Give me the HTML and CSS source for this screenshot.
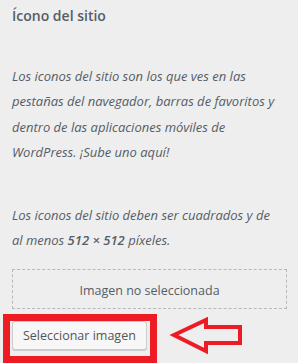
FILE: index.html
```html
<!DOCTYPE html>
<html lang="es">
<head>
<meta charset="utf-8">
<link rel="stylesheet" href="styles.css">
</head>
<body>
<div class="panel">
  <h3 class="title">Ícono del sitio</h3>
  <p class="desc">Los iconos del sitio son los que ves en las pestañas del navegador, barras de favoritos y dentro de las aplicaciones móviles de WordPress. ¡Sube uno aquí!</p>
  <p class="desc desc-2">Los iconos del sitio deben ser cuadrados y de al menos <strong>512 × 512</strong> píxeles.</p>
  <div class="placeholder">Imagen no seleccionada</div>
  <div class="actions">
    <button class="btn" type="button">Seleccionar imagen</button>
  </div>
</div>
<div class="highlight"></div>
<svg class="arrow" width="90" height="50" viewBox="0 0 90 50">
  <polygon points="14,25 46,10 46,17 80,17 80,33 46,33 46,41" fill="none" stroke="#ed1c24" stroke-width="4" stroke-linejoin="miter" stroke-miterlimit="10"/>
</svg>
</body>
</html>
```

FILE: styles.css
```css
html, body {
  margin: 0;
  padding: 0;
  background: #eeeeee;
  height: 100%;
  overflow: hidden;
}
body {
  font-family: "Open Sans", "Liberation Sans", sans-serif;
  color: #555d66;
  position: relative;
}
.panel {
  padding: 4px 11px 0 12px;
}
.title {
  margin: 0;
  font-size: 14px;
  line-height: 24.5px;
  font-weight: 600;
  color: #555d66;
}
.desc {
  margin: 35px 0 0;
  padding-right: 9px;
  font-size: 13px;
  line-height: 25.5px;
  font-style: italic;
  color: #555d66;
}
.desc-2 {
  margin-top: 37px;
}
.desc strong {
  font-weight: 600;
}
.placeholder {
  margin-top: 15.5px;
  border: 1px dashed #b4b9be;
  display: flex;
  align-items: center;
  justify-content: center;
  font-size: 12.5px;
  color: #555d66;
  padding-top: 3px;
  box-sizing: border-box;
  height: 40px;
}
.actions {
  margin-top: 12px;
  display: flex;
}
.btn {
  font-family: "Open Sans", "Liberation Sans", sans-serif;
  font-size: 12.5px;
  color: #555;
  background: #f7f7f7;
  border: 1px solid #cccccc;
  border-radius: 3px;
  box-shadow: 0 1px 0 #cccccc;
  height: 29px;
  padding: 0 10px;
  line-height: 27px;
  white-space: nowrap;
}
.highlight {
  position: absolute;
  left: 3px;
  top: 314px;
  width: 140px;
  height: 35px;
  border: 7px solid #ed1c24;
}
.arrow {
  position: absolute;
  left: 160px;
  top: 310px;
}
```
